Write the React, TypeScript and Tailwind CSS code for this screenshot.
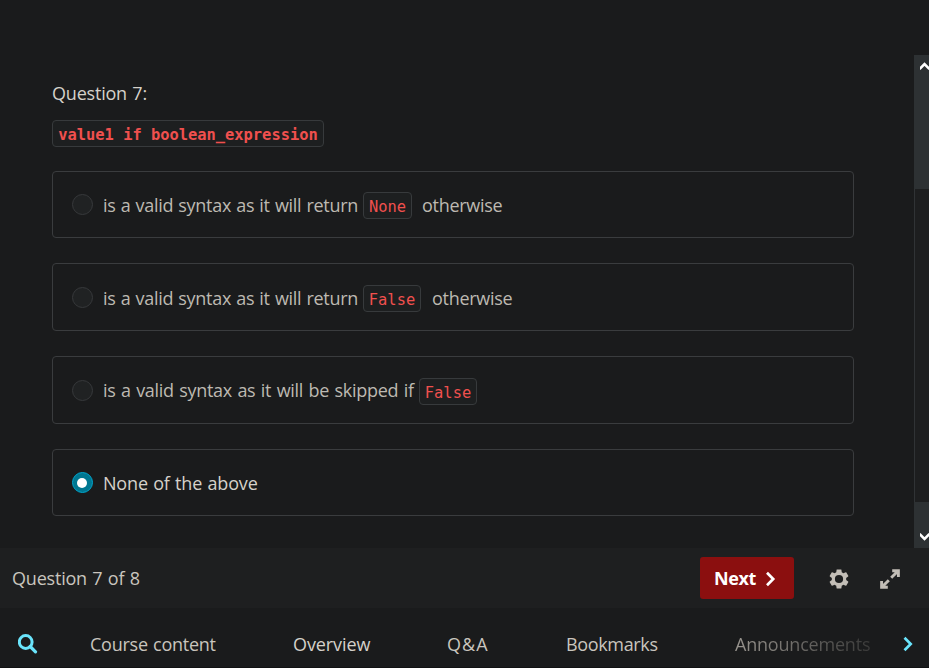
import type { ReactNode } from 'react';

function Code({ children, className = '' }: { children: ReactNode; className?: string }) {
  return (
    <code
      className={`flex h-[27px] shrink-0 items-center justify-center whitespace-pre rounded-[4px] border border-[#373a3c] bg-[#1d1f20] pt-[5px] font-['DejaVu_Sans_Mono',monospace] text-[15.4px] leading-none text-[#f0504e] ${className}`}
    >
      {children}
    </code>
  );
}

function Option({ children, checked = false, className = '' }: { children: ReactNode; checked?: boolean; className?: string }) {
  return (
    <div className={`flex items-center rounded-[4px] border border-[#3a3c3e] pl-[19px] ${className}`}>
      <span
        className={`flex size-[21px] shrink-0 items-center justify-center rounded-full border ${
          checked ? 'border-[#00a5cc] bg-[#007791]' : 'border-[#37393b] bg-[#202223]'
        }`}
      >
        {checked && <span className="mr-px size-[10px] rounded-full bg-white" />}
      </span>
      <div className={`ml-[10px] flex items-center whitespace-pre pt-[2px] ${checked ? 'text-[#d5d1ca]' : 'text-[#bdb9b1]'}`}>{children}</div>
    </div>
  );
}

export default function App() {
  return (
    <div className="flex h-[668px] w-[929px] flex-col overflow-hidden bg-[#1a1b1c] font-['Open_Sans','Noto_Sans',sans-serif] text-[18px] leading-[27px] tracking-[-0.3px] text-[#c9c5be] [word-spacing:0.9px]">
      <div className="flex h-[548px]">
        <main className="flex w-[914px] flex-col pl-[52px] pt-[80px]">
          <h1 className="w-fit tracking-[-0.2px] text-[#d5d1ca]">Question 7:</h1>
          <Code className="mt-[13px] w-[272px] font-bold tracking-normal [word-spacing:0px]">value1 if boolean_expression</Code>
          <div className="mt-6 flex w-[802px] flex-col">
            <Option className="h-[67px]">
              <span className="w-[260px] [word-spacing:0.8px]">is a valid syntax as it will return</span>
              <Code className="w-[49px] tracking-normal">None</Code>
              <span className="ml-[10px]">otherwise</span>
            </Option>
            <Option className="mt-[25px] h-[68px]">
              <span className="w-[260px] [word-spacing:0.8px]">is a valid syntax as it will return</span>
              <Code className="w-[58px] tracking-normal">False</Code>
              <span className="ml-[11px]">otherwise</span>
            </Option>
            <Option className="mt-[25px] h-[68px]">
              <span className="-mt-[2px] w-[316px] [word-spacing:1.1px]">is a valid syntax as it will be skipped if</span>
              <Code className="w-[58px] tracking-normal">False</Code>
            </Option>
            <Option checked className="mt-[25px] h-[67px]">
              <span className="tracking-[-0.18px]">None of the above</span>
            </Option>
          </div>
        </main>
        <div className="mt-[55px] flex w-[15px] flex-col justify-between border-l border-[#303335] bg-[#1d1e1f]">
          <div className="-ml-px h-[134px] bg-[#2d3133] pl-[6px] pt-[7px]">
            <svg width="9" height="8" viewBox="0 0 9 8" fill="none" stroke="#fff" strokeWidth="2.6">
              <path d="M-.5 7 4.5 2l5 5" />
            </svg>
          </div>
          <div className="-ml-px h-[46px] bg-[#2d3133] pl-[6px] pt-[31px]">
            <svg width="9" height="8" viewBox="0 0 9 8" fill="none" stroke="#fff" strokeWidth="2.6">
              <path d="m-.5 1 5 5 5-5" />
            </svg>
          </div>
        </div>
      </div>

      <div className="flex h-[60px] items-center bg-[#1e1f20] pl-3">
        <span className="w-[688px] tracking-[-0.2px]">Question 7 of 8</span>
        <button className="flex h-[42px] w-[94px] items-center rounded-[3px] bg-[#8b0f0f] pl-[14px] text-left font-bold tracking-[-0.4px] text-white">
          <span className="w-[51px]">Next</span>
          <svg className="mt-px" width="11" height="16" viewBox="0 0 11 16" fill="none" stroke="currentColor" strokeWidth="2.7">
            <path d="m2 1.8 6.2 6.2L2 14.2" />
          </svg>
        </button>
        <svg className="ml-[33px] mt-px" width="24" height="24" viewBox="0 0 24 24" fill="#c3beb7">
          <path
            fillRule="evenodd"
            d="M19.14 12.94c.04-.3.06-.61.06-.94 0-.32-.02-.64-.07-.94l2.03-1.58c.18-.14.23-.41.12-.61l-1.92-3.32c-.12-.22-.37-.29-.59-.22l-2.39.96c-.5-.38-1.03-.7-1.62-.94l-.36-2.54c-.04-.24-.24-.41-.48-.41h-3.84c-.24 0-.43.17-.47.41l-.36 2.54c-.59.24-1.13.57-1.62.94l-2.39-.96c-.22-.08-.47 0-.59.22L2.74 8.87c-.12.21-.08.47.12.61l2.03 1.58c-.05.3-.09.63-.09.94s.02.64.07.94l-2.03 1.58c-.18.14-.23.41-.12.61l1.92 3.32c.12.22.37.29.59.22l2.39-.96c.5.38 1.03.7 1.62.94l.36 2.54c.05.24.24.41.48.41h3.84c.24 0 .44-.17.47-.41l.36-2.54c.59-.24 1.13-.56 1.62-.94l2.39.96c.22.08.47 0 .59-.22l1.92-3.32c.12-.22.07-.47-.12-.61l-2.01-1.58zM12 16.1A4.1 4.1 0 1 1 12 7.9a4.1 4.1 0 0 1 0 8.2z"
          />
        </svg>
        <svg className="ml-[29px] mt-px" width="20" height="20" viewBox="0 0 20 20" fill="none" stroke="#c3beb7" strokeWidth="2.9">
          <path d="M12.2 1.8h6.2v6.2M17.8 2.2l-6.6 6.6M7.8 18.2H1.6V12M2.2 17.8l6.6-6.6" />
        </svg>
      </div>

      <nav className="flex h-[60px] items-center border-b border-[#111213] bg-[#1a1b1c] pl-[18px] pt-[14px]">
        <svg className="-mt-[2px]" width="20" height="20" viewBox="0 0 20 20" fill="none" stroke="#6ae4fb">
          <circle cx="7.7" cy="8" r="6.4" strokeWidth="3" />
          <path d="m12.2 12.5 5.3 5.3" strokeWidth="3.2" strokeLinecap="round" />
        </svg>
        <span className="ml-[52px] w-[203px] tracking-[-0.25px]">Course content</span>
        <span className="w-[154px] tracking-[-0.1px] text-[#d5d1ca]">Overview</span>
        <span className="w-[119px] tracking-[1.1px]">Q&amp;A</span>
        <span className="w-[169px] tracking-[-0.35px]">Bookmarks</span>
        <span className="w-[168px] bg-linear-to-r from-[#99958f] from-0% to-[#3b3b3a] to-80% bg-clip-text tracking-[-0.2px] text-transparent">Announcements</span>
        <svg className="-mt-px" width="12" height="16" viewBox="0 0 12 16" fill="none" stroke="#6ae4fb" strokeWidth="2.7">
          <path d="m1.5 1.8 6.2 6.2-6.2 6.2" />
        </svg>
      </nav>
    </div>
  );
}
